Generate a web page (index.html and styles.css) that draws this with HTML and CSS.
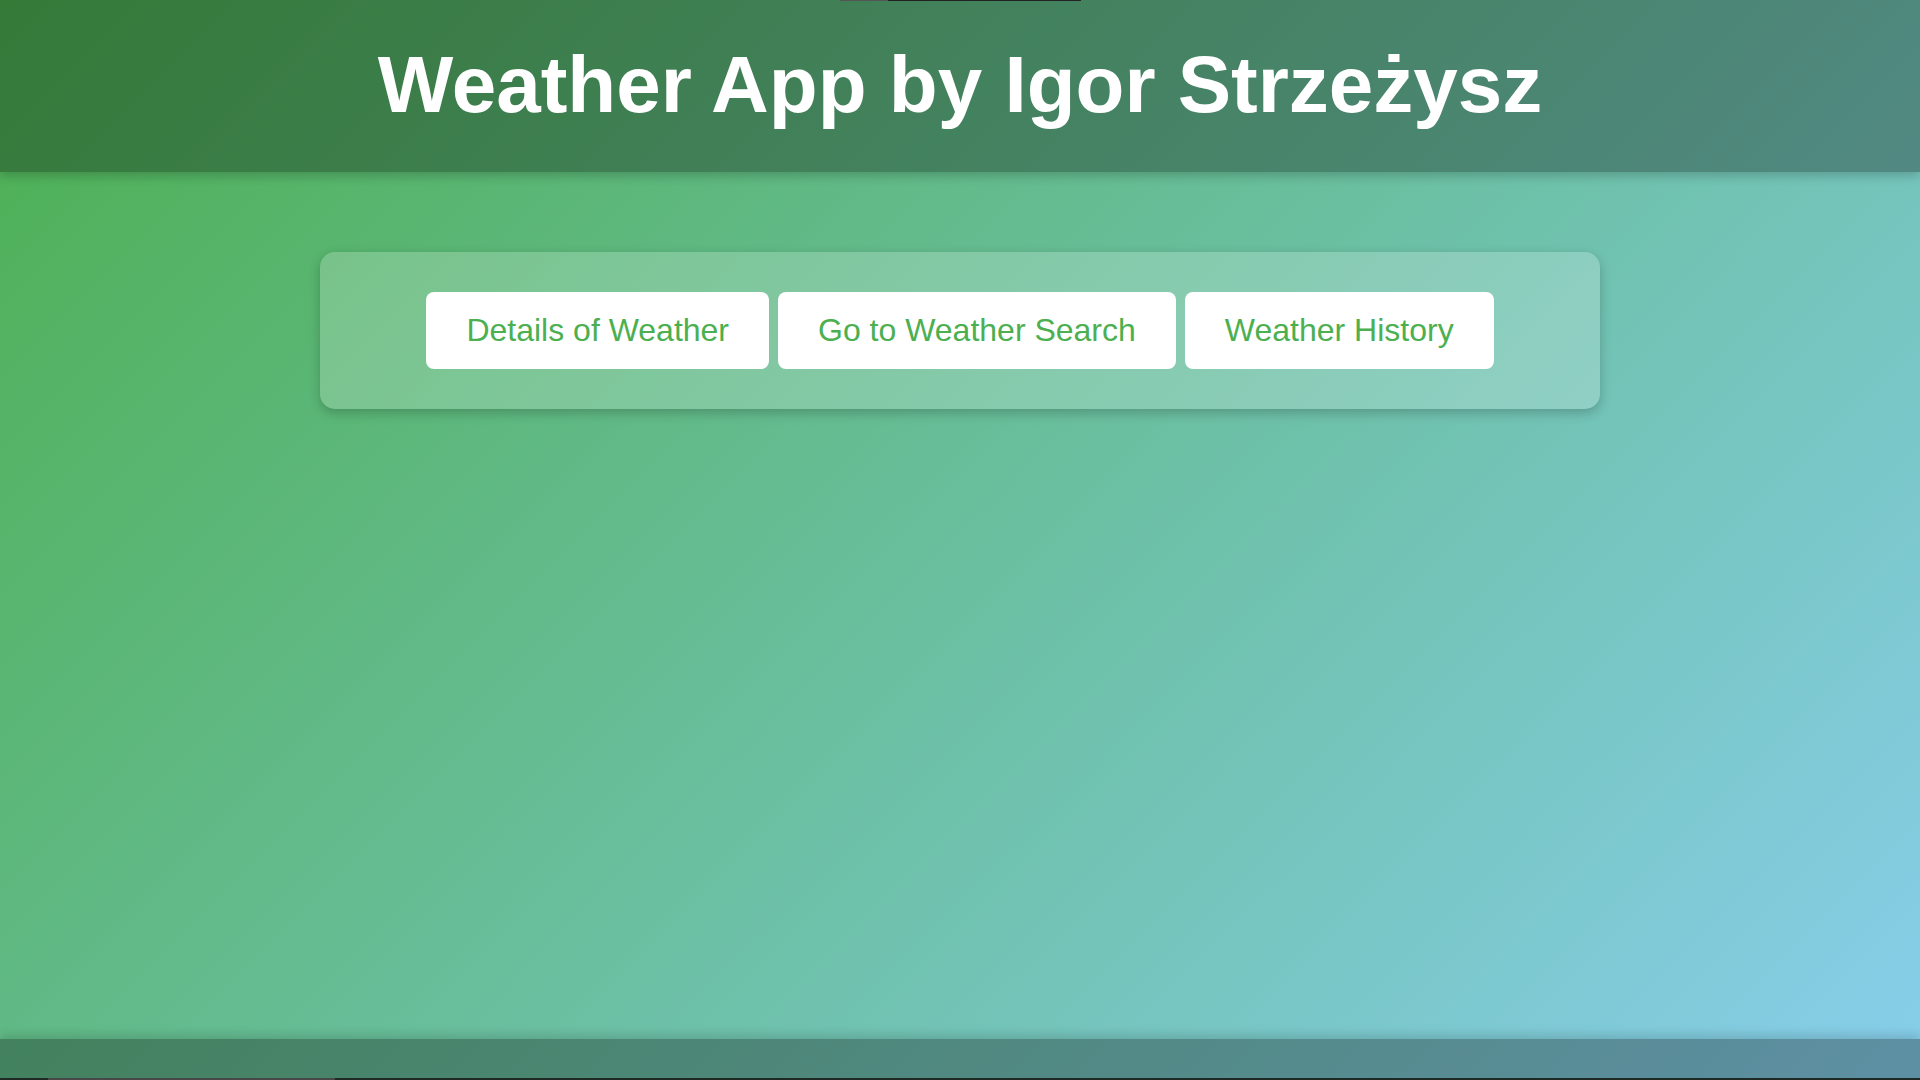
FILE: index.html
```html
<!DOCTYPE html>
<html lang="pl">
<head>
<meta charset="utf-8">
<title>Weather App by Igor Strzeżysz</title>
<link rel="stylesheet" href="styles.css">
</head>
<body>
  <header class="site-header">
    <span class="top-line"><span class="top-line-thumb"></span></span>
    <h1 class="site-title">Weather App by Igor Strzeżysz</h1>
  </header>
  <main class="site-main">
    <nav class="nav-panel">
      <a class="nav-btn" href="#">Details of Weather</a>
      <a class="nav-btn" href="#">Go to Weather Search</a>
      <a class="nav-btn" href="#">Weather History</a>
    </nav>
  </main>
  <footer class="site-footer"></footer>
  <div class="bottom-strip"><span class="bottom-thumb"></span></div>
</body>
</html>
```

FILE: styles.css
```css
* { box-sizing: border-box; }

html, body {
  margin: 0;
  padding: 0;
  height: 100%;
}

body {
  font-family: "Liberation Sans", Arial, sans-serif;
  background: linear-gradient(135deg, #4caf50 0%, #87ceeb 100%);
  min-height: 100vh;
  display: flex;
  flex-direction: column;
  overflow: hidden;
}

.site-header {
  position: relative;
  z-index: 2;
  background: rgba(0, 0, 0, 0.3);
  padding: 39px 0 41px;
  text-align: center;
  box-shadow: 0 4px 10px rgba(0, 0, 0, 0.2);
}

.top-line {
  position: absolute;
  top: 0;
  left: 840px;
  width: 241px;
  height: 1px;
  background: #222;
}

.top-line-thumb {
  display: block;
  width: 48px;
  height: 1px;
  background: #555;
}

.site-title {
  margin: 0;
  color: #fff;
  font-size: 80px;
  font-weight: bold;
  line-height: 92px;
}

.site-main {
  flex: 1;
  display: flex;
  justify-content: center;
  align-items: flex-start;
  padding-top: 80px;
}

.nav-panel {
  width: 1280px;
  background: rgba(255, 255, 255, 0.2);
  border-radius: 15px;
  padding: 40px 0;
  display: flex;
  justify-content: center;
  gap: 9px;
  box-shadow: 0 4px 12px rgba(0, 0, 0, 0.22);
}

.nav-btn {
  display: block;
  background: #fff;
  color: #4caf50;
  text-decoration: none;
  font-size: 32px;
  line-height: 37px;
  padding: 20px 40px;
  border-radius: 8px;
}

.site-footer {
  position: relative;
  z-index: 2;
  height: 39px;
  background: rgba(0, 0, 0, 0.3);
  box-shadow: 0 -4px 10px rgba(0, 0, 0, 0.15);
}

.bottom-strip {
  height: 2px;
  background: #1f2b24;
  padding-left: 48px;
}

.bottom-thumb {
  display: block;
  width: 287px;
  height: 2px;
  background: #4a4a4a;
}
```
